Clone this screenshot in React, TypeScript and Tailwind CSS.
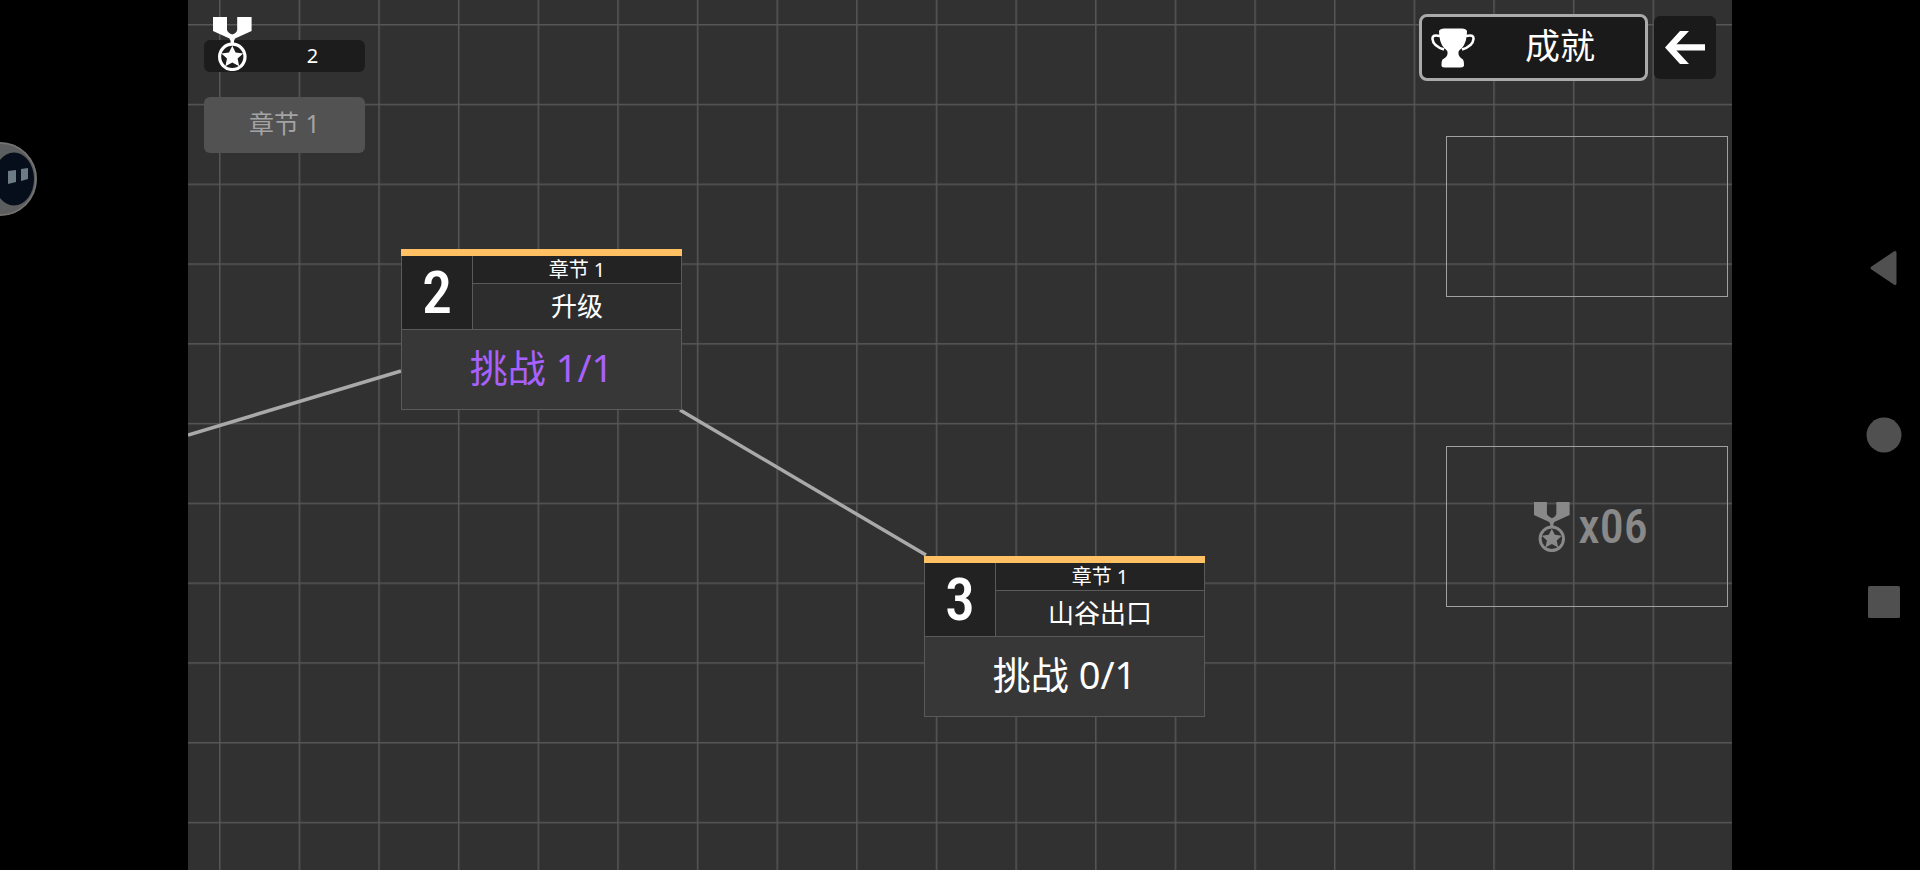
import { clsx } from "clsx"

interface Stage { id: number; chapter: string; title: string; done: number; total: number; place: string }

const CELL = 80

const stages: Stage[] = [
  { id: 2, chapter: "章节 1", title: "升级", done: 1, total: 1, place: "left-[213px] top-[249px]" },
  { id: 3, chapter: "章节 1", title: "山谷出口", done: 0, total: 1, place: "left-[736px] top-[556px]" },
]

function MedalIcon({ className }: { className?: string }) {
  return (
    <svg viewBox="0 0 39 54" className={className} fill="currentColor" aria-hidden="true">
      <path d="M0 0H14V13Q15 16 19.300 17.500Q23.500 16 24.200 13V0H38.600V14L22 21.500L21 24V27H17.600V24L16.500 21.500L0 14Z" />
      <circle cx="19.300" cy="39.800" r="12.700" fill="none" stroke="currentColor" strokeWidth="3.200" />
      <path d="M19.300 28.800L22.600 35.500L30.200 36.400L24.600 41.600L26.200 49.200L19.300 45.400L12.400 49.200L14 41.600L8.400 36.400L16 35.500Z" />
    </svg>
  )
}

function TrophyIcon() {
  return (
    <svg viewBox="0 0 44 40" className="h-10 w-11" fill="currentColor" aria-hidden="true">
      <path d="M8 3Q9 0.500 13 0.500H31Q35 0.500 36 3Q36 14 31 20Q27.500 22.500 27.500 24V26Q28 29 32 31.500Q33.500 34 33 38Q32 39.500 29 39.500H14Q11 39.500 10.500 38Q10 34 11.500 31.500Q16 29 16.500 26V24Q16.500 22.500 13 20Q8 14 8 3Z" />
      <path d="M9 8Q1 6 1.500 11Q2 18 13 21.500M35 8Q43 6 42.500 11Q42 18 31 21.500" fill="none" stroke="currentColor" strokeWidth="2.600" />
    </svg>
  )
}

function ArrowIcon() {
  return (
    <svg viewBox="0 0 40 33" className="h-[33px] w-10" fill="currentColor" aria-hidden="true">
      <path d="M0 16.500L15 0H24L11.500 13.200H40V19.500H11.500L24 33H15Z" />
    </svg>
  )
}

function MapBackdrop() {
  return (
    <svg className="absolute inset-0 h-full w-full" aria-hidden="true">
      <defs>
        <pattern id="grid" x="31" y="24" width={CELL - 0.36} height={CELL - 0.22} patternUnits="userSpaceOnUse">
          <path d="M0 0.750H80M0.750 0V80" fill="none" stroke="#565656" strokeWidth="1.500" />
        </pattern>
      </defs>
      <rect width="100%" height="100%" fill="url(#grid)" />
      <path d="M0 435L213 371M492 410L738 555" fill="none" stroke="#a9a9a9" strokeWidth="3.500" />
    </svg>
  )
}

function StageCard({ stage }: { stage: Stage }) {
  const cleared = stage.done >= stage.total
  return (
    <article className={clsx("absolute flex h-[161px] w-[281px] flex-col border border-t-0 border-[#5a5a5a] bg-[#373737]", stage.place)}>
      <div className="-mx-px h-[7px] bg-[#ffc163]" />
      <div className="flex h-[74px] border-b border-[#5a5a5a]">
        <div className="flex w-[71px] items-center justify-center border-r border-[#5a5a5a] bg-[#222] font-['Liberation_Sans_Narrow','Roboto_Condensed',sans-serif] text-[60px] leading-none font-medium">
          {stage.id}
        </div>
        <div className="flex flex-1 flex-col text-center">
          <p className="h-7 border-b border-[#5a5a5a] bg-[#232323] text-[20px] leading-[28px]">{stage.chapter}</p>
          <h2 className="flex-1 bg-[#2d2d2d] text-[26px] leading-[44px]">{stage.title}</h2>
        </div>
      </div>
      <p className={clsx("text-center text-[38px] leading-[74px]", cleared && "text-[#a861ff]")}>
        挑战 {stage.done}/{stage.total}
      </p>
    </article>
  )
}

function AssistBubble() {
  return (
    <svg viewBox="0 0 40 76" className="mt-[141px] h-[76px] w-10" aria-hidden="true">
      <circle cx="0" cy="38" r="37" fill="#5c5d5e" />
      <circle cx="0" cy="38" r="36" fill="none" stroke="#77736f" strokeWidth="1.500" />
      <ellipse cx="14" cy="38" rx="20" ry="26.500" fill="#050e1a" />
      <path d="M8 30L16 29V41L8 43ZM21 28L28 27V38L21 40Z" fill="#6d7b84" />
    </svg>
  )
}

export default function App() {
  return (
    <div className="flex h-screen overflow-hidden bg-black font-['Noto_Sans','Noto_Sans_CJK_SC',sans-serif] text-white">
      <aside className="w-[188px] shrink-0">
        <AssistBubble />
      </aside>

      <main className="relative min-w-0 flex-1 overflow-hidden bg-[#313131]">
        <MapBackdrop />
        {stages.map((s) => (
          <StageCard key={s.id} stage={s} />
        ))}
        <div className="absolute top-[136px] left-[1258px] h-[161px] w-[282px] border border-[#a0a0a0]" />
        <div className="absolute top-[446px] left-[1258px] flex h-[161px] w-[282px] items-center justify-center gap-2 border border-[#a0a0a0] pl-2 text-[#898989]">
          <MedalIcon className="h-[50px] w-9" />
          <span className="font-['Liberation_Sans_Narrow','Roboto_Condensed',sans-serif] text-[48px] leading-none font-medium">x06</span>
        </div>

        <header className="relative flex items-start justify-between px-4">
          <div className="flex w-[161px] flex-col gap-[25px] pt-10">
            <div className="relative h-8 rounded-md bg-[#1c1c1c] pl-14 text-center text-[20px] leading-8">
              <MedalIcon className="absolute -top-[23px] left-[9px] h-[54px] w-[39px]" />
              2
            </div>
            <button type="button" className="h-14 rounded-md bg-[#525252] pb-[3px] text-[25px] leading-none text-[#a3a3a3]">
              章节 1
            </button>
          </div>
          <nav className="flex items-center gap-[6px] pt-[14px]">
            <button type="button" className="flex h-[67px] w-[229px] items-center rounded-lg border-[3px] border-[#aaa] bg-[#1a1a1a] pl-[9px]">
              <TrophyIcon />
              <span className="flex-1 pb-1 text-[35px] leading-none">成就</span>
            </button>
            <button type="button" aria-label="返回" className="flex h-[63px] w-[62px] items-center justify-center rounded-md bg-[#1a1a1a]">
              <ArrowIcon />
            </button>
          </nav>
        </header>
      </main>

      <nav className="flex w-[188px] shrink-0 flex-col items-end justify-center gap-[131px] pr-[18px] text-[#505050]">
        <button type="button" aria-label="Back">
          <svg viewBox="0 0 36 36" className="size-9" fill="currentColor" stroke="currentColor" strokeWidth="3" strokeLinejoin="round">
            <path d="M6 18L29 2.500V33.500Z" />
          </svg>
        </button>
        <button type="button" aria-label="Home">
          <svg viewBox="0 0 36 36" className="size-9" fill="currentColor">
            <circle cx="18" cy="18" r="17.500" />
          </svg>
        </button>
        <button type="button" aria-label="Recents">
          <svg viewBox="0 0 36 36" className="size-9" fill="currentColor">
            <rect x="2" y="2" width="32" height="32" rx="1.500" />
          </svg>
        </button>
      </nav>
    </div>
  )
}
